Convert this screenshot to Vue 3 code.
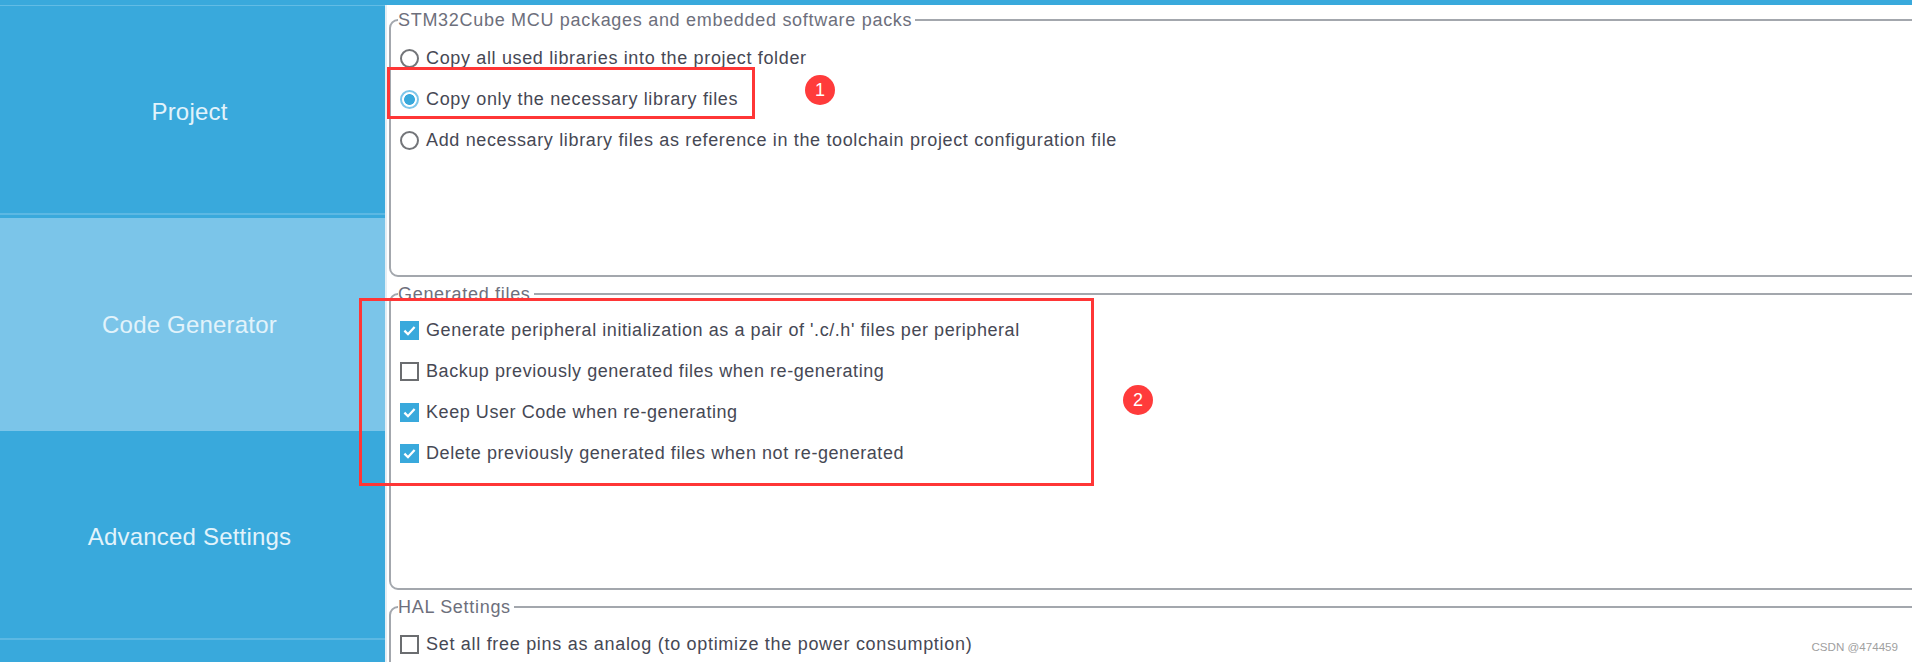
<script setup>
const navItems = [
  { label: 'Project', active: false },
  { label: 'Code Generator', active: true },
  { label: 'Advanced Settings', active: false },
]

const packOptions = [
  { label: 'Copy all used libraries into the project folder', checked: false },
  { label: 'Copy only the necessary library files', checked: true },
  { label: 'Add necessary library files as reference in the toolchain project configuration file', checked: false },
]

const generatedOptions = [
  { label: "Generate peripheral initialization as a pair of '.c/.h' files per peripheral", checked: true },
  { label: 'Backup previously generated files when re-generating', checked: false },
  { label: 'Keep User Code when re-generating', checked: true },
  { label: 'Delete previously generated files when not re-generated', checked: true },
]
</script>

<template>
  <div class="page">
    <div class="top-strip"></div>
    <div class="body-row">
      <aside class="sidebar">
        <div
          v-for="item in navItems"
          :key="item.label"
          class="nav-item"
          :class="{ 'nav-item--active': item.active }"
        >{{ item.label }}</div>
        <div class="nav-rest"></div>
      </aside>

      <main class="content">
        <fieldset class="group group--packs">
          <legend>STM32Cube MCU packages and embedded software packs</legend>
          <label v-for="opt in packOptions" :key="opt.label" class="row row--radio">
            <span class="radio" :class="{ 'radio--on': opt.checked }"></span>
            <span>{{ opt.label }}</span>
          </label>
        </fieldset>

        <fieldset class="group group--generated">
          <legend>Generated files</legend>
          <label v-for="opt in generatedOptions" :key="opt.label" class="row row--check">
            <span class="check" :class="{ 'check--on': opt.checked }">
              <svg v-if="opt.checked" viewBox="0 0 19 19" width="19" height="19">
                <path d="M4.4 9.6 L8 13.2 L14.6 6" fill="none" stroke="#fff" stroke-width="2.3" />
              </svg>
            </span>
            <span>{{ opt.label }}</span>
          </label>
        </fieldset>

        <fieldset class="group group--hal">
          <legend>HAL Settings</legend>
          <label class="row row--check">
            <span class="check"></span>
            <span>Set all free pins as analog (to optimize the power consumption)</span>
          </label>
        </fieldset>
      </main>
    </div>

    <div class="mark mark--one"></div>
    <div class="mark mark--two"></div>
    <div class="badge badge--one">1</div>
    <div class="badge badge--two">2</div>
    <div class="watermark">CSDN @474459</div>
  </div>
</template>

<style>
html, body {
  margin: 0;
  background: #fff;
  overflow: hidden;
}
</style>

<style scoped>
.page {
  position: relative;
  width: 1912px;
  height: 662px;
  overflow: hidden;
  font-family: "Liberation Sans", Arial, sans-serif;
  background: #fff;
}
.top-strip {
  height: 5px;
  background: #39a9dc;
}
.body-row {
  display: flex;
  height: 657px;
}
.sidebar {
  width: 385px;
  flex: none;
  display: flex;
  flex-direction: column;
  background: #39a9dc;
  border-top: 1px solid #62bce5;
  box-sizing: border-box;
}
.nav-item {
  height: 209px;
  margin-bottom: 3px;
  padding-top: 5px;
  padding-right: 6px;
  border-bottom: 2px solid #5cb8e3;
  box-sizing: border-box;
  display: flex;
  align-items: center;
  justify-content: center;
  color: #e2f3fb;
  font-size: 24px;
  letter-spacing: 0.2px;
}
.nav-item--active {
  height: 213px;
  margin-bottom: 0;
  padding-top: 0;
  border-bottom: none;
  background: #7bc5e9;
}
.nav-item:last-of-type {
  height: 211px;
  margin-bottom: 0;
  padding-top: 7px;
  border-bottom: 2px solid #62bce5;
}
.nav-rest {
  flex: 1;
}
.content {
  flex: 1;
  min-width: 0;
  overflow: hidden;
  padding-left: 2px;
  border-left: 2px solid #e4eef4;
  box-sizing: border-box;
}
.group {
  margin: 0 -20px 0 0;
  padding: 0 0 0 9px;
  border: 2px solid #a3a7ad;
  border-radius: 9px;
  box-sizing: border-box;
  min-width: 0;
}
.group legend {
  padding: 0 3px 0 0;
  margin-left: -2px;
  font-size: 18px;
  letter-spacing: 0.7px;
  line-height: 22px;
  color: #6d6f7c;
}
.group--packs {
  height: 268px;
  margin-top: 4px;
  padding-top: 6.5px;
  letter-spacing: 0.65px;
}
.group--generated {
  height: 307px;
  margin-top: 6px;
  padding-top: 5.6px;
  letter-spacing: 0.56px;
}
.group--hal {
  height: 100px;
  margin-top: 6px;
  padding-top: 6.4px;
  letter-spacing: 0.7px;
}
.row {
  display: flex;
  align-items: center;
  color: #464854;
  font-size: 18px;
  white-space: nowrap;
}
.row--radio {
  height: 41px;
  gap: 7px;
}
.row--check {
  height: 40.8px;
  gap: 7px;
}
.radio {
  width: 19px;
  height: 19px;
  border-radius: 50%;
  border: 2px solid #737579;
  box-sizing: border-box;
  background: #fff;
  flex: none;
}
.radio--on {
  border-color: #7cc6ea;
  background: radial-gradient(circle, #39a9dc 0 5px, #fff 5.8px);
}
.check {
  width: 19px;
  height: 19px;
  border: 2px solid #6b6d70;
  box-sizing: border-box;
  background: #fff;
  flex: none;
  position: relative;
}
.check--on {
  border: none;
  background: #39a9dc;
}
.check svg {
  display: block;
}
.mark {
  position: absolute;
  border: 3px solid #ff3636;
  box-sizing: border-box;
}
.mark--one {
  left: 387px;
  top: 67px;
  width: 368px;
  height: 52px;
}
.mark--two {
  left: 359px;
  top: 298px;
  width: 735px;
  height: 188px;
}
.badge {
  position: absolute;
  width: 30px;
  height: 30px;
  border-radius: 50%;
  background: #ff3b3b;
  color: #fff;
  font-size: 18px;
  line-height: 30px;
  text-align: center;
}
.badge--one {
  left: 805px;
  top: 75px;
}
.badge--two {
  left: 1123px;
  top: 385px;
}
.watermark {
  position: absolute;
  right: 14px;
  top: 639px;
  font-size: 11.6px;
  line-height: 16px;
  color: #a0a0a0;
}
</style>
